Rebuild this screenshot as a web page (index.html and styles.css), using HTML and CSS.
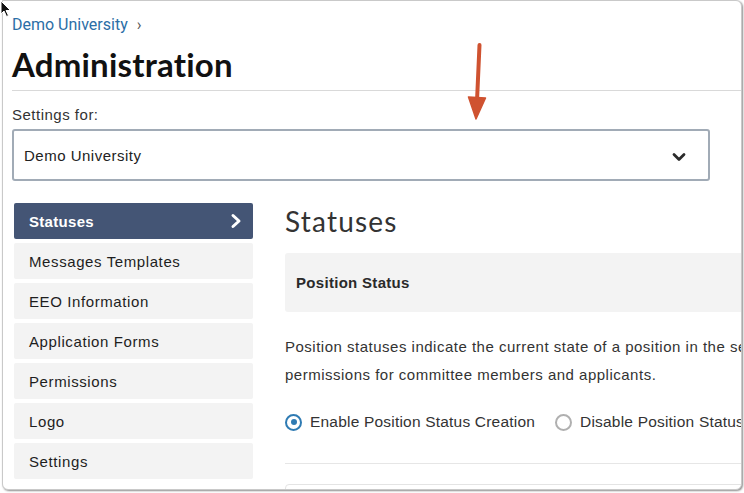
FILE: index.html
```html
<!DOCTYPE html>
<html>
<head>
<meta charset="utf-8">
<link rel="stylesheet" href="styles.css">
</head>
<body>
<div class="window">
  <div class="page">
    <div class="crumbs"><a class="crumb-link">Demo University</a><span class="crumb-sep">›</span></div>
    <h1 class="title">Administration</h1>
    <div class="rule"></div>
    <label class="field-label">Settings for:</label>
    <div class="select">
      <span>Demo University</span>
      <svg class="select-chev" width="14" height="10" viewBox="0 0 14 10"><path d="M2 2.5 L7 7.5 L12 2.5" fill="none" stroke="#2b2b2b" stroke-width="2.8" stroke-linecap="round" stroke-linejoin="round"/></svg>
    </div>
    <div class="layout">
      <nav class="sidebar">
        <div class="nav-item active"><span>Statuses</span>
          <svg width="12" height="16" viewBox="0 0 12 16"><path d="M3 2.5 L9 8 L3 13.5" fill="none" stroke="#fff" stroke-width="3" stroke-linecap="round" stroke-linejoin="round"/></svg>
        </div>
        <div class="nav-item">Messages Templates</div>
        <div class="nav-item">EEO Information</div>
        <div class="nav-item">Application Forms</div>
        <div class="nav-item">Permissions</div>
        <div class="nav-item">Logo</div>
        <div class="nav-item">Settings</div>
      </nav>
      <main class="main">
        <h2 class="section-title">Statuses</h2>
        <div class="panel">Position Status</div>
        <p class="desc">Position statuses indicate the current state of a position in the search process and set default<br>permissions for committee members and applicants.</p>
        <div class="radios">
          <label class="radio"><span class="dot on"></span>Enable Position Status Creation</label>
          <label class="radio"><span class="dot"></span>Disable Position Status Creation</label>
        </div>
        <div class="rule2"></div>
        <div class="box"></div>
      </main>
    </div>
  </div>
  <svg class="arrow" width="40" height="90" viewBox="0 0 40 90"><path d="M21.5 4 L19 60" stroke="#cf5230" stroke-width="4" stroke-linecap="round" fill="none"/><path d="M10.5 56 L27.5 57 L18 78 Z" fill="#cf5230" stroke="#cf5230" stroke-width="1.5" stroke-linejoin="round"/></svg>
</div>
<svg class="cursor" width="14" height="18" viewBox="0 0 14 18"><path d="M1 1 L1 14 L4 11 L6.5 16.5 L8.5 15.5 L6 10.5 L10.5 10.5 Z" fill="#111" stroke="#fff" stroke-width="1"/></svg>
</body>
</html>
```
FILE: styles.css
```css
* { box-sizing: border-box; }
html, body { margin: 0; padding: 0; background: #fff; }
body { font-family: "Liberation Sans", Arial, sans-serif; color: #222; width: 744px; height: 493px; overflow: hidden; position: relative; letter-spacing: 0.5px; }
.window {
  position: relative;
  margin-left: 2px;
  width: 740px;
  height: 490px;
  border: 1px solid #c9c9c9;
  border-radius: 0 6px 6px 6px;
  box-shadow: 1px 1px 2px rgba(0,0,0,0.45);
  overflow: hidden;
  background: #fff;
}
.page { padding: 14px 0 0 9px; width: 1000px; }
.crumbs { height: 20px; line-height: 20px; font-family: Roboto, "Liberation Sans", sans-serif; font-size: 16px; letter-spacing: 0; }
.crumb-link { color: #2b6ea6; }
.crumb-sep { color: #555; margin-left: 9px; font-size: 16px; }
.title {
  margin: 9px 0 0 0;
  font-family: Lato, "Liberation Sans", sans-serif;
  font-weight: 700;
  font-size: 33px;
  line-height: 40px;
  color: #111;
  letter-spacing: 0.2px;
}
.rule { margin-top: 6px; height: 1px; background: #d9d9d9; width: 740px; }
.field-label { display: block; margin-top: 14px; line-height: 20px; font-size: 15px; color: #333; }
.select {
  margin-top: 4px;
  width: 698px;
  height: 52px;
  border: 2px solid #a1abb6;
  border-radius: 3px;
  display: flex;
  align-items: center;
  justify-content: space-between;
  padding: 0 22px 0 10px;
  font-size: 15px;
  color: #222;
}
.select-chev { margin-top: 4px; }
.layout { display: flex; gap: 32px; margin-top: 22px; margin-left: 2px; }
.sidebar { width: 239px; display: flex; flex-direction: column; gap: 4px; flex-shrink: 0; }
.nav-item {
  height: 36px;
  display: flex;
  align-items: center;
  justify-content: space-between;
  padding: 0 11px 0 15px;
  background: #f3f3f3;
  border-radius: 2px;
  font-size: 15px;
  color: #1e1e1e;
  letter-spacing: 0.6px;
}
.nav-item.active { background: #445575; color: #fff; font-weight: 700; letter-spacing: 0.3px; }
.main { flex: 1; }
.section-title {
  margin: 0;
  font-family: Lato, "Liberation Sans", sans-serif;
  font-weight: 400;
  font-size: 28px;
  line-height: 36px;
  color: #333;
  letter-spacing: 1.2px;
}
.panel {
  margin-top: 14px;
  height: 59px;
  background: #f3f3f3;
  border-radius: 3px 0 0 3px;
  padding-left: 11px;
  display: flex;
  align-items: center;
  font-weight: 700;
  font-size: 15px;
  color: #2a2a2a;
  letter-spacing: 0.3px;
}
.desc { margin: 21px 0 0 0; line-height: 28px; font-size: 15px; color: #333; white-space: nowrap; }
.radios { display: flex; margin-top: 23px; height: 20px; align-items: center; gap: 20px; }
.radio { display: flex; align-items: center; font-size: 15.5px; color: #333; white-space: nowrap; letter-spacing: 0.2px; }
.dot {
  width: 17px; height: 17px; border-radius: 50%;
  border: 2px solid #b0b0b0; background: #fff;
  margin-right: 8px; display: inline-block; position: relative;
}
.dot.on { border: 2px solid #2f7bb3; }
.dot.on::after {
  content: ""; position: absolute; left: 3.5px; top: 3.5px; width: 6px; height: 6px; border-radius: 50%; background: #2f7bb3;
}
.rule2 { margin-top: 31px; height: 1px; background: #e6e6e6; }
.box { margin-top: 20px; height: 40px; border: 1px solid #e4e4e4; border-radius: 4px; }
.arrow { position: absolute; left: 455px; top: 40px; }
.cursor { position: absolute; left: 0; top: 0; }
```
